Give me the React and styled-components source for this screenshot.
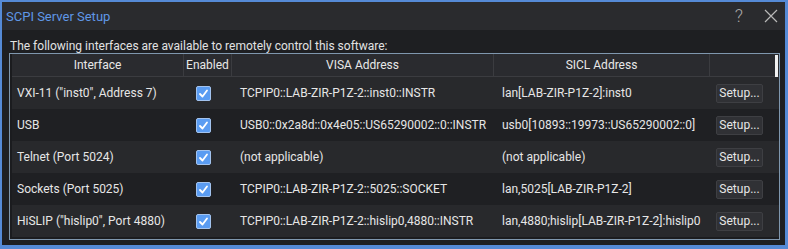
import React from "react";
import styled, { createGlobalStyle } from "styled-components";

const GlobalStyle = createGlobalStyle`
  html, body { margin: 0; padding: 0; background: #1e1f22; }
  body { font-family: Roboto, "Liberation Sans", sans-serif; }
  * { box-sizing: border-box; }
`;

const Window = styled.div`
  width: 788px;
  height: 249px;
  background: #1e1f22;
  border-style: solid;
  border-color: #558ad6;
  border-width: 2px 3px 4px 2px;
  display: flex;
  flex-direction: column;
`;

const TitleBar = styled.div`
  height: 28px;
  flex: none;
  background: #2a2b2e;
  display: flex;
  align-items: center;
  padding: 0 7px 0 4px;
`;

const Title = styled.div`
  color: #5f97e6;
  font-size: 13px;
`;

const TitleButtons = styled.div`
  margin-left: auto;
  display: flex;
  align-items: center;
  gap: 21px;
`;

const HelpGlyph = styled.span`
  color: #a8a8a8;
  font-size: 18px;
  font-weight: 300;
  line-height: 18px;
  font-family: Roboto, sans-serif;
`;

const Content = styled.div`
  flex: 1;
  padding: 9px 5px 5px 7px;
  display: flex;
  flex-direction: column;
`;

const Intro = styled.div`
  color: #e2e2e2;
  font-size: 12px;
  line-height: 14px;
  height: 14px;
  padding-left: 1px;
`;

const Table = styled.div`
  position: relative;
  border: 1px solid #7f97ae;
  padding: 0 0 2px 2px;
  background: #1b1c1f;
  height: 187px;
`;

const Grid = styled.div`
  display: grid;
  grid-template-columns: 171px 48px 262px 216px 1fr;
  grid-template-rows: 23px repeat(5, 32px);
`;

const HeaderCell = styled.div`
  background: #2a2b2f;
  border-bottom: 1px solid #3b3c40;
  border-left: ${(p) => (p.$first ? "none" : "1px solid #3b3c40")};
  color: #e8e8e8;
  font-size: 12px;
  display: flex;
  align-items: center;
  justify-content: center;
`;

const Cell = styled.div`
  background: ${(p) => (p.$odd ? "#28292c" : "#1f2023")};
  color: #e6e6e6;
  font-size: 12px;
  display: flex;
  align-items: center;
  padding-left: ${(p) => p.$pad || 9}px;
  white-space: nowrap;
  overflow: hidden;
`;

const Check = styled.div`
  width: 15px;
  height: 15px;
  border-radius: 2px;
  background: #5a9cf2;
  border: 1px solid #a3c3ee;
  display: flex;
  align-items: center;
  justify-content: center;
`;

const SetupButton = styled.button`
  height: 19px;
  width: 47px;
  padding: 0;
  background: #303135;
  border: 1px solid #3e3f43;
  border-radius: 2px;
  color: #e6e6e6;
  font-family: Roboto, "Liberation Sans", sans-serif;
  font-size: 12px;
`;

const ScrollThumb = styled.div`
  position: absolute;
  top: 1px;
  right: 1px;
  width: 3px;
  height: 22px;
  background: #f2f2f2;
`;

const rows = [
  ['VXI-11 ("inst0", Address 7)', "TCPIP0::LAB-ZIR-P1Z-2::inst0::INSTR", "lan[LAB-ZIR-P1Z-2]:inst0"],
  ["USB", "USB0::0x2a8d::0x4e05::US65290002::0::INSTR", "usb0[10893::19973::US65290002::0]"],
  ["Telnet (Port 5024)", "(not applicable)", "(not applicable)"],
  ["Sockets (Port 5025)", "TCPIP0::LAB-ZIR-P1Z-2::5025::SOCKET", "lan,5025[LAB-ZIR-P1Z-2]"],
  ['HiSLIP ("hislip0", Port 4880)', "TCPIP0::LAB-ZIR-P1Z-2::hislip0,4880::INSTR", "lan,4880;hislip[LAB-ZIR-P1Z-2]:hislip0"],
];

const CheckMark = () => (
  <svg width="11" height="11" viewBox="0 0 11 11">
    <path d="M2 6 L4.5 8.5 L9 2.5" fill="none" stroke="#fff" strokeWidth="1.8" strokeLinecap="round" strokeLinejoin="round" />
  </svg>
);

const CloseIcon = () => (
  <svg width="14" height="14" viewBox="0 0 14 14">
    <path d="M1 1 L13 13 M13 1 L1 13" stroke="#b8b8b8" strokeWidth="1.2" />
  </svg>
);

export default function App() {
  return (
    <>
      <GlobalStyle />
      <Window>
        <TitleBar>
          <Title>SCPI Server Setup</Title>
          <TitleButtons>
            <HelpGlyph>?</HelpGlyph>
            <CloseIcon />
          </TitleButtons>
        </TitleBar>
        <Content>
          <Intro>The following interfaces are available to remotely control this software:</Intro>
          <Table>
            <Grid>
              <HeaderCell $first>Interface</HeaderCell>
              <HeaderCell>Enabled</HeaderCell>
              <HeaderCell>VISA Address</HeaderCell>
              <HeaderCell>SICL Address</HeaderCell>
              <HeaderCell />
              {rows.map((r, i) => {
                const odd = i % 2 === 0;
                return (
                  <React.Fragment key={i}>
                    <Cell $odd={odd} $pad={5}>{r[0]}</Cell>
                    <Cell $odd={odd} $pad={13}>
                      <Check><CheckMark /></Check>
                    </Cell>
                    <Cell $odd={odd}>{r[1]}</Cell>
                    <Cell $odd={odd}>{r[2]}</Cell>
                    <Cell $odd={odd} $pad={7}>
                      <SetupButton>Setup...</SetupButton>
                    </Cell>
                  </React.Fragment>
                );
              })}
            </Grid>
            <ScrollThumb />
          </Table>
        </Content>
      </Window>
    </>
  );
}
